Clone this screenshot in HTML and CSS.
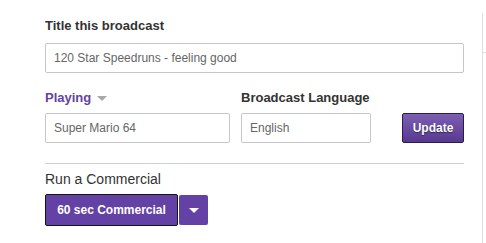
FILE: index.html
```html
<!DOCTYPE html>
<html lang="en">
<head>
    <meta charset="UTF-8">
    <title>Broadcast Settings</title>
    <link rel="stylesheet" href="styles.css">
</head>
<body>
    <div class="page">
        <div class="panel">
            <label class="field-label" for="title">Title this broadcast</label>
            <input type="text" id="title" class="text-input" value="120 Star Speedruns - feeling good">

            <div class="field-row">
                <div class="field game-field">
                    <label class="field-label playing" for="game">Playing <span class="caret"></span></label>
                    <input type="text" id="game" class="text-input" value="Super Mario 64">
                </div>
                <div class="field lang-field">
                    <label class="field-label" for="lang">Broadcast Language</label>
                    <input type="text" id="lang" class="text-input" value="English">
                </div>
                <button type="button" class="update-button">Update</button>
            </div>

            <hr class="divider">

            <div class="section-title">Run a Commercial</div>
            <div class="commercial">
                <button type="button" class="commercial-button">60 sec Commercial</button>
                <button type="button" class="commercial-toggle"><span class="caret white"></span></button>
            </div>
        </div>
        <div class="side"></div>
    </div>
</body>
</html>
```

FILE: styles.css
```css
body {
    margin: 0;
    background-color: #ffffff;
    font-family: "Liberation Sans", Arial, sans-serif;
}

.page {
    display: flex;
    height: 243px;
}

.panel {
    width: 420px;
    padding: 18px 0 0 45px;
}

.field-label {
    display: block;
    font-size: 13px;
    font-weight: bold;
    line-height: 16px;
    color: #333333;
    margin-bottom: 9px;
}

.text-input {
    display: block;
    box-sizing: border-box;
    width: 100%;
    height: 30px;
    padding: 0 8px;
    border: 1px solid #c6c6c6;
    border-radius: 2px;
    font-family: "Liberation Sans", Arial, sans-serif;
    font-size: 12px;
    color: #666666;
    outline: none;
}

.field-row {
    display: flex;
    align-items: flex-end;
    margin-top: 17px;
}

.field-row .field-label {
    margin-bottom: 7px;
}

.game-field {
    width: 185px;
    margin-right: 11px;
}

.lang-field {
    width: 130px;
}

.playing {
    color: #6441a5;
}

.caret {
    display: inline-block;
    width: 0;
    height: 0;
    margin-left: 2px;
    vertical-align: middle;
    border-left: 5px solid transparent;
    border-right: 5px solid transparent;
    border-top: 5px solid #a8a8a8;
}

.caret.white {
    margin: 0;
    border-top-color: #ffffff;
}

.update-button {
    margin-left: auto;
    width: 62px;
    height: 30px;
    padding: 0;
    border: 1px solid #2b1d47;
    border-radius: 2px;
    background: linear-gradient(#7c5fb3, #573a8f);
    color: #ffffff;
    font-family: "Liberation Sans", Arial, sans-serif;
    font-size: 12px;
    font-weight: bold;
    text-shadow: 0 1px 1px rgba(0, 0, 0, 0.5);
    cursor: pointer;
}

.divider {
    border: none;
    border-top: 1px solid #cfcfcf;
    margin: 20px 0 7px;
}

.section-title {
    font-size: 14px;
    line-height: 16px;
    color: #333333;
    margin-bottom: 7px;
}

.commercial {
    display: flex;
    align-items: center;
    gap: 1px;
}

.commercial-button {
    height: 32px;
    width: 133px;
    padding: 0;
    border: 1px solid #141414;
    border-radius: 2px;
    background-color: #6441a5;
    color: #ffffff;
    font-family: "Liberation Sans", Arial, sans-serif;
    font-size: 12px;
    font-weight: bold;
    cursor: pointer;
}

.commercial-toggle {
    display: flex;
    align-items: center;
    justify-content: center;
    width: 29px;
    height: 30px;
    padding: 0;
    border: none;
    border-radius: 2px;
    background-color: #6441a5;
    cursor: pointer;
}

.side {
    margin: 13px 0 0 18px;
    width: 3px;
    border-left: 1px solid #dddddd;
    background: linear-gradient(#ffffff 39px, #dddddd 39px, #dddddd 40px, #ffffff 40px);
}
```
